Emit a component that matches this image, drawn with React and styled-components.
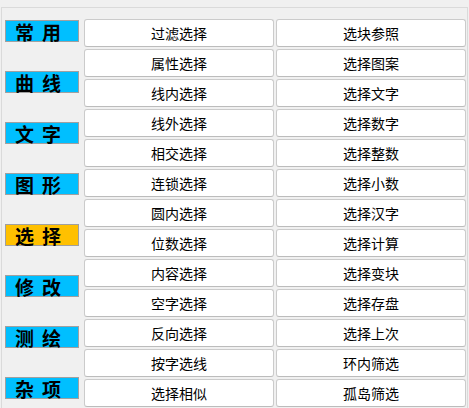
import React from "react";
import styled, { createGlobalStyle } from "styled-components";

const GlobalStyle = createGlobalStyle`
  html, body {
    margin: 0;
    padding: 0;
    background: #f0f0f0;
    overflow: hidden;
  }
  body {
    font-family: "Noto Sans CJK SC", "Noto Sans", sans-serif;
  }
`;

const Panel = styled.div`
  box-sizing: border-box;
  margin: 7px 0 0 1px;
  width: 467px;
  height: 420px;
  border: 1px solid #dadada;
  border-bottom: none;
  padding: 11px 0 0 3px;
  display: flex;
  align-items: flex-start;
  gap: 5px;
`;

const Sidebar = styled.div`
  display: flex;
  flex-direction: column;
  gap: 29px;
  padding-top: 1px;
`;

const Category = styled.div`
  box-sizing: border-box;
  width: 74px;
  height: 22px;
  border: 1px solid #a0a0a0;
  background: ${(p) => (p.$active ? "#ffc000" : "#00bfff")};
  color: #000;
  display: flex;
  align-items: center;
  font-size: 19px;
  font-weight: 700;
  line-height: 1;
  letter-spacing: 8px;
  padding-left: 9px;
  white-space: nowrap;
`;

const ButtonGrid = styled.div`
  display: grid;
  grid-template-columns: 190px 190px;
  grid-auto-rows: 28px;
  column-gap: 2px;
  row-gap: 2px;
`;

const ToolButton = styled.button`
  box-sizing: border-box;
  margin: 0;
  padding: 0;
  border: 1px solid #cbcbcb;
  border-bottom-color: #bcbcbc;
  border-radius: 3px;
  background: #ffffff;
  color: #000;
  font-family: "Noto Sans CJK SC", "Noto Sans", sans-serif;
  font-size: 14px;
  line-height: 26px;
  text-align: center;
  cursor: pointer;
`;

const categories = [
  { name: "常用" },
  { name: "曲线" },
  { name: "文字" },
  { name: "图形" },
  { name: "选择", active: true },
  { name: "修改" },
  { name: "测绘" },
  { name: "杂项" },
];

const actions = [
  ["过滤选择", "选块参照"],
  ["属性选择", "选择图案"],
  ["线内选择", "选择文字"],
  ["线外选择", "选择数字"],
  ["相交选择", "选择整数"],
  ["连锁选择", "选择小数"],
  ["圆内选择", "选择汉字"],
  ["位数选择", "选择计算"],
  ["内容选择", "选择变块"],
  ["空字选择", "选择存盘"],
  ["反向选择", "选择上次"],
  ["按字选线", "环内筛选"],
  ["选择相似", "孤岛筛选"],
];

export default function App() {
  return (
    <>
      <GlobalStyle />
      <Panel>
        <Sidebar>
          {categories.map((c) => (
            <Category key={c.name} $active={c.active}>
              {c.name}
            </Category>
          ))}
        </Sidebar>
        <ButtonGrid>
          {actions.flat().map((label) => (
            <ToolButton key={label}>{label}</ToolButton>
          ))}
        </ButtonGrid>
      </Panel>
    </>
  );
}
